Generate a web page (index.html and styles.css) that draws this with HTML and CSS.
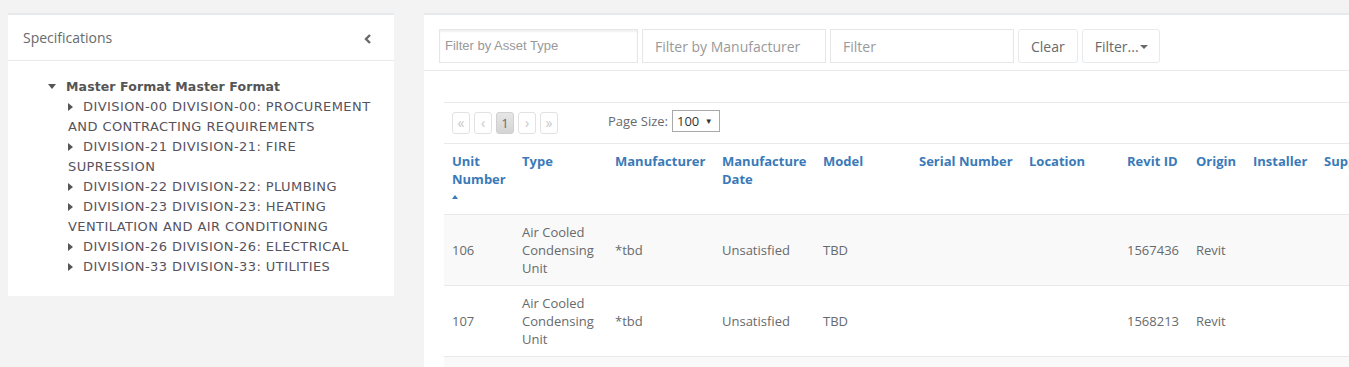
FILE: index.html
```html
<!DOCTYPE html>
<html lang="en">
<head>
  <meta charset="UTF-8">
  <title>Assets</title>
  <link rel="stylesheet" href="styles.css">
</head>
<body>

  <div class="page">

    <div class="spec-panel">
      <div class="panel-title">
        <span>Specifications</span>
        <svg class="collapse-icon" width="8" height="10" viewBox="0 0 8 10">
          <polyline points="6,1 2,5 6,9" fill="none" stroke="#676a6c" stroke-width="2.4"/>
        </svg>
      </div>
      <div class="tree">
        <div class="tree-root">
          <svg class="caret-down" width="8" height="5" viewBox="0 0 8 5"><polygon points="0,0 8,0 4,5" fill="#555"/></svg>
          <b>Master Format Master Format</b>
        </div>
        <div class="tree-children">
          <div class="tree-item"><svg class="caret-right" width="5" height="8" viewBox="0 0 5 8"><polygon points="0,0 5,4 0,8" fill="#555"/></svg>DIVISION-00 DIVISION-00: PROCUREMENT AND CONTRACTING REQUIREMENTS</div>
          <div class="tree-item"><svg class="caret-right" width="5" height="8" viewBox="0 0 5 8"><polygon points="0,0 5,4 0,8" fill="#555"/></svg>DIVISION-21 DIVISION-21: FIRE SUPRESSION</div>
          <div class="tree-item"><svg class="caret-right" width="5" height="8" viewBox="0 0 5 8"><polygon points="0,0 5,4 0,8" fill="#555"/></svg>DIVISION-22 DIVISION-22: PLUMBING</div>
          <div class="tree-item"><svg class="caret-right" width="5" height="8" viewBox="0 0 5 8"><polygon points="0,0 5,4 0,8" fill="#555"/></svg>DIVISION-23 DIVISION-23: HEATING VENTILATION AND AIR CONDITIONING</div>
          <div class="tree-item"><svg class="caret-right" width="5" height="8" viewBox="0 0 5 8"><polygon points="0,0 5,4 0,8" fill="#555"/></svg>DIVISION-26 DIVISION-26: ELECTRICAL</div>
          <div class="tree-item"><svg class="caret-right" width="5" height="8" viewBox="0 0 5 8"><polygon points="0,0 5,4 0,8" fill="#555"/></svg>DIVISION-33 DIVISION-33: UTILITIES</div>
        </div>
      </div>
    </div>

    <div class="asset-panel">
      <div class="filter-bar">
        <input type="text" class="asset-filter" placeholder="Filter by Asset Type">
        <input type="text" class="filter-input" placeholder="Filter by Manufacturer">
        <input type="text" class="filter-input" placeholder="Filter">
        <button class="btn">Clear</button>
        <button class="btn">Filter...<span class="btn-caret"></span></button>
      </div>

      <div class="asset-content">
        <div class="grid">
          <div class="grid-toolbar">
            <div class="pager">
              <span class="pager-btn">&laquo;</span>
              <span class="pager-btn">&lsaquo;</span>
              <span class="pager-btn active">1</span>
              <span class="pager-btn">&rsaquo;</span>
              <span class="pager-btn">&raquo;</span>
            </div>
            <div class="page-size">
              Page Size:
              <span class="size-select">100 <span class="select-arrow">&#9660;</span></span>
            </div>
          </div>

          <table class="asset-table">
            <colgroup>
              <col style="width: 70px">
              <col style="width: 93px">
              <col style="width: 107px">
              <col style="width: 101px">
              <col style="width: 96px">
              <col style="width: 110px">
              <col style="width: 98px">
              <col style="width: 69px">
              <col style="width: 57px">
              <col style="width: 71px">
              <col style="width: 100px">
            </colgroup>
            <thead>
              <tr>
                <th>Unit<br>Number<span class="sort-up"></span></th>
                <th>Type</th>
                <th>Manufacturer</th>
                <th>Manufacture<br>Date</th>
                <th>Model</th>
                <th>Serial Number</th>
                <th>Location</th>
                <th>Revit ID</th>
                <th>Origin</th>
                <th>Installer</th>
                <th>Supplier</th>
              </tr>
            </thead>
            <tbody>
              <tr>
                <td>106</td>
                <td>Air Cooled Condensing Unit</td>
                <td>*tbd</td>
                <td>Unsatisfied</td>
                <td>TBD</td>
                <td></td>
                <td></td>
                <td>1567436</td>
                <td>Revit</td>
                <td></td>
                <td></td>
              </tr>
              <tr>
                <td>107</td>
                <td>Air Cooled Condensing Unit</td>
                <td>*tbd</td>
                <td>Unsatisfied</td>
                <td>TBD</td>
                <td></td>
                <td></td>
                <td>1568213</td>
                <td>Revit</td>
                <td></td>
                <td></td>
              </tr>
              <tr>
                <td>108</td>
                <td>Air Cooled Condensing Unit</td>
                <td>*tbd</td>
                <td>Unsatisfied</td>
                <td>TBD</td>
                <td></td>
                <td></td>
                <td>1568390</td>
                <td>Revit</td>
                <td></td>
                <td></td>
              </tr>
            </tbody>
          </table>
        </div>
      </div>
    </div>

  </div>

</body>
</html>
```

FILE: styles.css
```css
* {
  box-sizing: border-box;
  margin: 0;
  padding: 0;
}

html, body {
  overflow: hidden;
}

body {
  font-family: 'Open Sans', 'Liberation Sans', sans-serif;
  font-size: 13px;
  color: #676a6c;
  background: #f3f3f4;
}

.page {
  display: flex;
  align-items: flex-start;
  gap: 30px;
  padding: 13px 0 0 8px;
  width: 1500px;
}

/* left: specification tree */

.spec-panel {
  width: 386px;
  flex-shrink: 0;
  background: #fff;
  border-top: 2px solid #e7eaec;
}

.panel-title {
  display: flex;
  justify-content: space-between;
  align-items: center;
  padding: 13px 22px 12px 15px;
  border-bottom: 1px solid #e7eaec;
  font-size: 14px;
  line-height: 20px;
  color: #676a6c;
}

.collapse-icon {
  margin-top: 2px;
}

.tree {
  padding: 16px 20px 19px 40px;
  font-family: 'DejaVu Sans', Verdana, sans-serif;
  font-size: 13px;
  line-height: 20px;
  color: #57525c;
}

.tree-root {
  color: #555;
  font-size: 12.5px;
  letter-spacing: 0.1px;
}

.caret-down {
  margin-right: 6px;
  vertical-align: 2px;
}

.tree-children {
  padding-left: 20px;
  letter-spacing: 0.42px;
}

.caret-right {
  margin-right: 10px;
  vertical-align: 0;
}

/* right: asset grid */

.asset-panel {
  width: 1000px;
  flex-shrink: 0;
  background: #fff;
  border-top: 2px solid #e7eaec;
  min-height: 360px;
}

.filter-bar {
  display: flex;
  gap: 4px;
  padding: 14px 15px 7px;
  border-bottom: 1px solid #e7eaec;
}

.filter-bar input {
  height: 34px;
  border: 1px solid #e5e6e7;
  outline: none;
  background: #fff;
}

.asset-filter {
  width: 199px;
  padding: 0 5px 2px;
  font-family: 'Liberation Sans', Arial, sans-serif;
  font-size: 13px;
  box-shadow: inset 0 2px 2px rgba(0, 0, 0, 0.06);
}

.filter-input {
  width: 184px;
  padding: 0 12px;
  font-family: 'Open Sans', sans-serif;
  font-size: 14px;
}

.filter-bar input::placeholder {
  color: #999;
}

.btn {
  height: 34px;
  padding: 0 12px;
  background: #fff;
  border: 1px solid #e7eaec;
  border-radius: 3px;
  font-family: 'Open Sans', sans-serif;
  font-size: 14px;
  color: #676a6c;
}

.btn:last-child {
  padding: 0 11px 0 12px;
}

.btn-caret {
  display: inline-block;
  width: 0;
  height: 0;
  margin-left: 1px;
  vertical-align: 3px;
  border-left: 4px solid transparent;
  border-right: 4px solid transparent;
  border-top: 4px solid #676a6c;
}

.asset-content {
  padding: 31px 0 0 20px;
}

.grid {
  border-top: 1px solid #e7eaec;
}

.grid-toolbar {
  display: flex;
  align-items: center;
  padding: 8px 0 8px 8px;
  height: 40px;
}

.pager {
  display: flex;
  gap: 4px;
  width: 156px;
}

.pager-btn {
  width: 18px;
  height: 22px;
  border: 1px solid #e2e2e2;
  border-radius: 3px;
  text-align: center;
  line-height: 20px;
  font-size: 14px;
  color: #c8c8c8;
}

.pager-btn.active {
  background: linear-gradient(#e6e6e6, #d4d4d4);
  border-color: #d0d0d0;
  color: #676a6c;
  font-size: 13px;
}

.page-size {
  display: flex;
  align-items: center;
  gap: 4px;
  font-size: 13px;
  color: #676a6c;
  margin-top: -4px;
}

.size-select {
  width: 48px;
  height: 22px;
  padding-left: 4px;
  border: 1px solid #a9a9a9;
  line-height: 20px;
  color: #333;
}

.select-arrow {
  font-size: 8px;
  vertical-align: 2px;
  margin-left: 2px;
}

.asset-table {
  table-layout: fixed;
  width: 972px;
  border-collapse: collapse;
  border-top: 1px solid #e7eaec;
  line-height: 18px;
}

.asset-table th {
  padding: 8px;
  text-align: left;
  vertical-align: top;
  white-space: nowrap;
  font-weight: 700;
  color: #3a7ab8;
  height: 71px;
  border-bottom: 1px solid #e7eaec;
}

.sort-up {
  display: block;
  width: 0;
  height: 0;
  margin-top: 7px;
  border-left: 3px solid transparent;
  border-right: 3px solid transparent;
  border-bottom: 4px solid #3a7ab8;
}

.asset-table td {
  padding: 8px;
  height: 71px;
  vertical-align: middle;
  border-bottom: 1px solid #e7eaec;
}

.asset-table tbody tr:nth-child(odd) {
  background: #f9f9f9;
}
```
